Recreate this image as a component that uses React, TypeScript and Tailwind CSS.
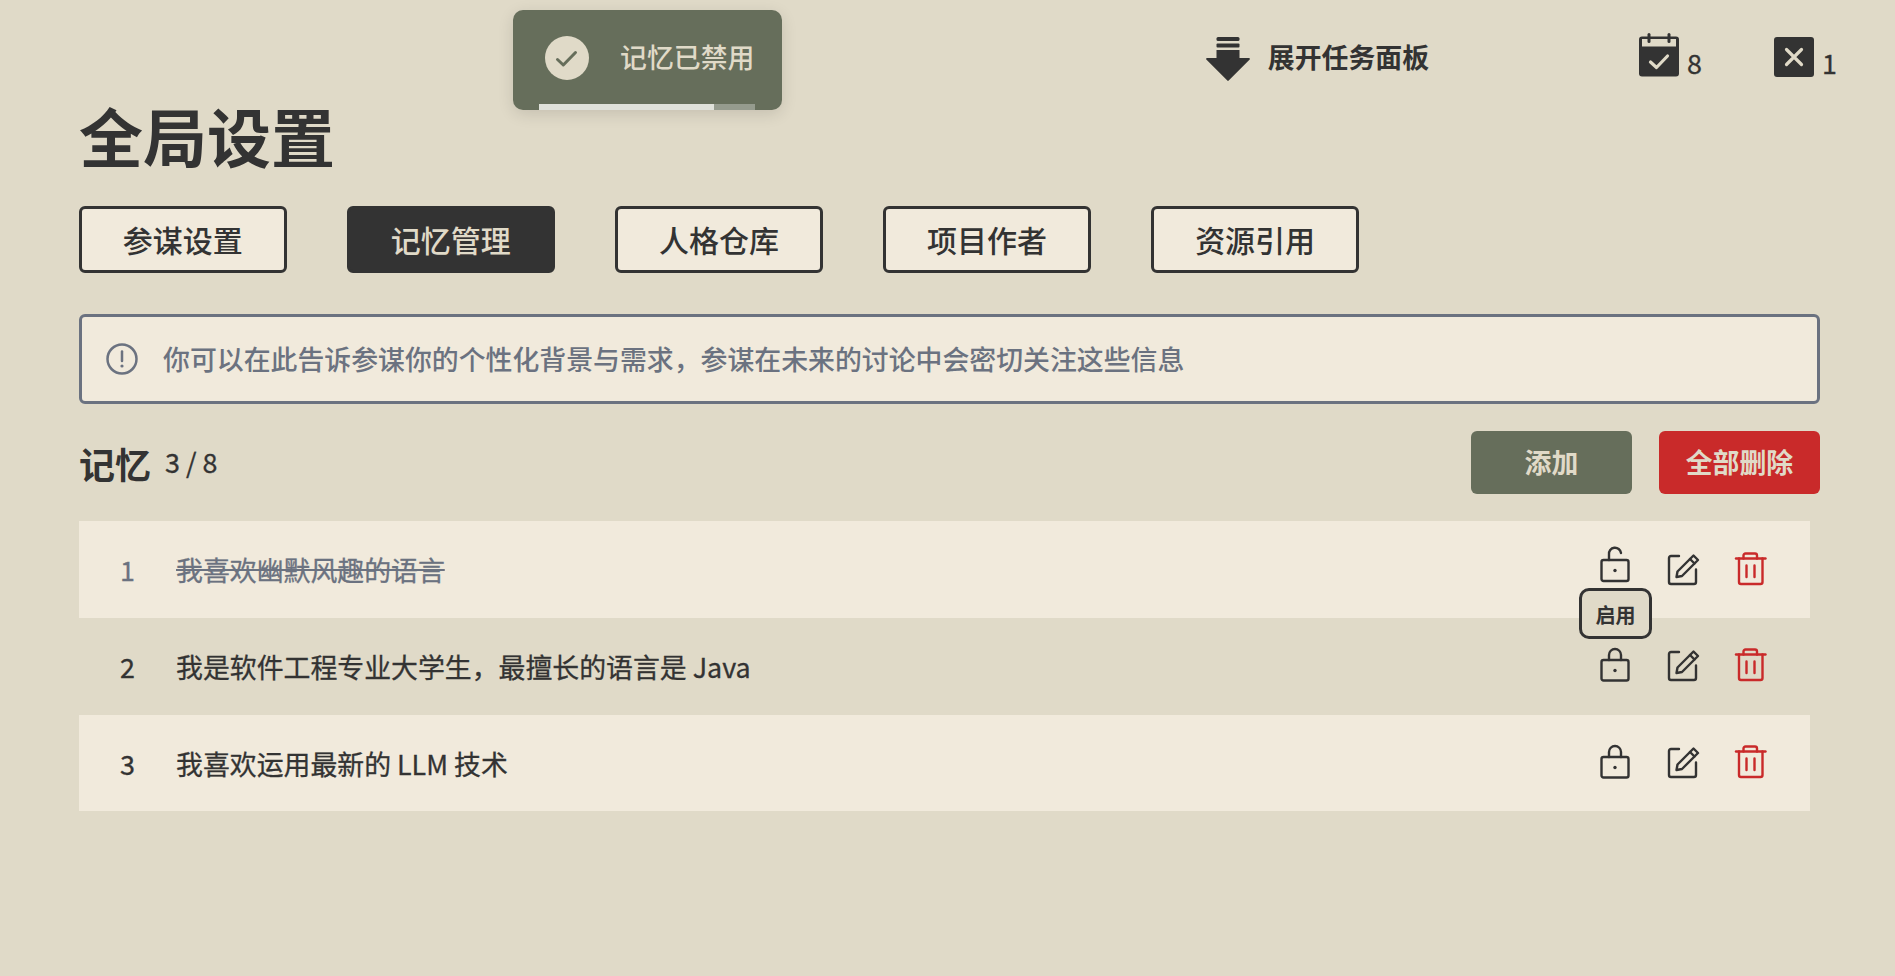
import React from "react";

const Lock = ({ open }: { open?: boolean }) => (
  <svg viewBox="0 0 36 36" className="w-9 h-9 overflow-visible" fill="none" stroke="#333333" strokeWidth="2.4" strokeLinecap="round" strokeLinejoin="round">
    {open ? (
      <>
        <rect x="4.5" y="8" width="27" height="21" rx="2" />
        <path d="M12 8 V2.5 a6 6 0 0 1 12 -1.5" />
        <circle cx="18" cy="18.5" r="1.7" fill="#333333" stroke="none" />
      </>
    ) : (
      <>
        <rect x="4.5" y="12" width="27" height="20.5" rx="2" />
        <path d="M12 12 V7 a6 6 0 0 1 12 0 V12" />
        <circle cx="18" cy="22.5" r="1.7" fill="#333333" stroke="none" />
      </>
    )}
  </svg>
);

const Edit = () => (
  <svg viewBox="0 0 36 36" className="w-9 h-9" fill="none" stroke="#333333" strokeWidth="2.4" strokeLinecap="round" strokeLinejoin="round">
    <path d="M14 4 H6 a2 2 0 0 0 -2 2 V30 a2 2 0 0 0 2 2 H29 a2 2 0 0 0 2 -2 V17.5" />
    <path d="M12.5 19.5 L28.5 3.5 L33 8 L17 24 L11.5 25 Z" />
    <path d="M25 7 L29.5 11.5" />
  </svg>
);

const Trash = () => (
  <svg viewBox="0 0 36 36" className="w-9 h-9" fill="none" stroke="#c92a2a" strokeWidth="2.4" strokeLinecap="round" strokeLinejoin="round">
    <path d="M3 6.5 H32.5" />
    <path d="M10.5 6.5 V3.5 a2 2 0 0 1 2 -2 h9.5 a2 2 0 0 1 2 2 V6.5" />
    <path d="M6 6.5 V30 a2 2 0 0 0 2 2 H27.5 a2 2 0 0 0 2 -2 V6.5" />
    <path d="M13.5 13.5 V25 M21.5 13.5 V25" />
  </svg>
);

const tabs = ["参谋设置", "记忆管理", "人格仓库", "项目作者", "资源引用"];

const rows = [
  { n: 1, text: "我喜欢幽默风趣的语言", off: true, bg: "bg-[#f1eadc]" },
  { n: 2, text: "我是软件工程专业大学生，最擅长的语言是 Java", off: false, bg: "" },
  { n: 3, text: "我喜欢运用最新的 LLM 技术", off: false, bg: "bg-[#f1eadc]" },
];

export default function App() {
  return (
    <div className="relative h-[976px] w-full overflow-hidden bg-[#e0dac8] pl-[79px] pr-[75px] text-[#333333] font-['Noto_Sans_CJK_SC',sans-serif]">
      {/* toast */}
      <div className="absolute left-[513px] top-[10px] flex h-[100px] w-[269px] items-center rounded-[10px] bg-[#666e5b] pb-[5px] pl-[32px] text-[#e0dac8] shadow-[0_4px_16px_rgba(0,0,0,0.12)]">
        <svg viewBox="0 0 44 44" className="h-[44px] w-[44px]">
          <circle cx="22" cy="22" r="22" fill="#e0dac8" />
          <path d="M12.5 23.5 L18.3 29 L30.5 16.5" fill="none" stroke="#666e5b" strokeWidth="3" strokeLinecap="round" strokeLinejoin="round" />
        </svg>
        <span className="ml-[31px] text-[26.88px] font-medium leading-none">记忆已禁用</span>
        <div className="absolute bottom-0 left-[26px] h-[6px] w-[216px] bg-[#959b8e]">
          <div className="h-full w-[175px] bg-[#dfe1da]" />
        </div>
      </div>

      {/* top bar */}
      <div className="-mr-[17px] flex h-[80px] items-start justify-end pt-[33px]">
        <div className="mr-[210px] mt-[2px] flex items-center">
          <svg viewBox="0 0 44 44" className="h-[44px] w-[44px]" fill="#333333">
            <rect x="10.5" y="0" width="23" height="4" rx="1.5" />
            <rect x="10.5" y="6.5" width="23" height="4" rx="1" />
            <path d="M10.5 13 H33.5 V21 H43 a1 1 0 0 1 .7 1.6 L22.7 43.6 a1 1 0 0 1 -1.4 0 L.3 22.6 a1 1 0 0 1 .7 -1.6 H10.5 Z" />
          </svg>
          <span className="mb-[4px] ml-[18px] text-[26.88px] font-bold leading-[44px]">展开任务面板</span>
        </div>
        <div className="flex w-[135px] items-start">
          <svg viewBox="0 0 40 44" className="h-[44px] w-[40px]" fill="#333333">
            <rect x="0" y="3.5" width="40" height="40" rx="3" />
            <rect x="3" y="6" width="34" height="7.5" fill="#e0dac8" />
            <rect x="8.5" y="0" width="3" height="10" rx="1.5" />
            <rect x="28.5" y="0" width="3" height="10" rx="1.5" />
            <path d="M11.5 29 L17.5 34.5 L28.5 23" fill="none" stroke="#e0dac8" strokeWidth="3.2" strokeLinecap="round" strokeLinejoin="round" />
          </svg>
          <span className="ml-[8px] mt-[10px] text-[26.88px] leading-[40px] [-webkit-text-stroke:0.3px]">8</span>
        </div>
        <div className="flex items-start pt-[4px]">
          <svg viewBox="0 0 40 40" className="h-[40px] w-[40px]" fill="#333333">
            <rect width="40" height="40" rx="3" />
            <path d="M12.5 12.5 L27.5 27.5 M27.5 12.5 L12.5 27.5" stroke="#e0dac8" strokeWidth="3.2" strokeLinecap="round" />
          </svg>
          <span className="ml-[8px] mt-[6px] text-[26.88px] leading-[40px] [-webkit-text-stroke:0.3px]">1</span>
        </div>
      </div>

      {/* title */}
      <h1 className="mt-[14px] text-[64px] font-bold leading-[80px]">全局设置</h1>

      {/* tabs */}
      <div className="mt-[32px] flex gap-[60.6px]">
        {tabs.map((t, i) => (
          <div
            key={t}
            className={`flex h-[67px] w-[207.5px] items-center justify-center rounded-[6px] border-[3px] border-[#333333] pb-[2px] text-[30px] font-medium leading-none ${
              i === 1 ? "bg-[#333333] text-[#e0dac8]" : "bg-[#f1eadc]"
            }`}
          >
            {t}
          </div>
        ))}
      </div>

      {/* alert */}
      <div className="mt-[41px] flex h-[90px] w-[1741px] items-center rounded-[6px] border-[3px] border-[#6b7280] bg-[#f1eadc] pl-[24px] text-[#6b7280]">
        <svg viewBox="0 0 32 32" className="h-[32px] w-[32px]" fill="none" stroke="#6b7280" strokeWidth="2.5" strokeLinecap="round">
          <circle cx="16" cy="16" r="14.5" />
          <path d="M16 8.5 V18" />
          <circle cx="16" cy="23" r="1.6" fill="#6b7280" stroke="none" />
        </svg>
        <span className="ml-[25px] text-[26.88px] font-medium leading-none">你可以在此告诉参谋你的个性化背景与需求，参谋在未来的讨论中会密切关注这些信息</span>
      </div>

      {/* section head */}
      <div className="mt-[27px] flex h-[63px] w-[1741px] items-center justify-between">
        <div className="flex items-center">
          <span className="text-[36px] font-bold leading-none">记忆</span>
          <span className="ml-[14px] text-[26.88px] leading-none [-webkit-text-stroke:0.3px]">3 / 8</span>
        </div>
        <div className="flex gap-[27px]">
          <div className="flex h-[63px] w-[161px] items-center justify-center rounded-[6px] bg-[#666e5b] text-[26.88px] font-bold text-[#e0dac8]">添加</div>
          <div className="flex h-[63px] w-[161px] items-center justify-center rounded-[6px] bg-[#c92a2a] text-[26.88px] font-bold text-[#e0dac8]">全部删除</div>
        </div>
      </div>

      {/* list */}
      <div className="mt-[27.33px] flex w-[1731px] flex-col">
        {rows.map((r) => (
          <div key={r.n} className={`flex h-[96.67px] items-center pt-[2px] text-[26.88px] ${r.bg} ${r.off ? "text-[#6b7280]" : ""}`}>
            <span className="w-[97px] text-center leading-none [-webkit-text-stroke:0.3px]">{r.n}</span>
            <span className={`leading-none [-webkit-text-stroke:0.3px] ${r.off ? "line-through" : ""}`}>{r.text}</span>
            <div className="mb-[2px] ml-auto mr-[41px] flex items-center gap-[32px]">
              <div className="relative h-9 w-9">
                <Lock open={r.off} />
                {r.off && (
                  <div className="absolute left-[-18px] top-[36px] z-10 flex h-[51px] w-[73px] items-center justify-center rounded-[10px] border-[3px] border-[#333333] bg-[#e0dac8] pt-[3px] text-[20px] font-bold leading-none text-[#333333]">
                    启用
                  </div>
                )}
              </div>
              <Edit />
              <Trash />
            </div>
          </div>
        ))}
      </div>
    </div>
  );
}
